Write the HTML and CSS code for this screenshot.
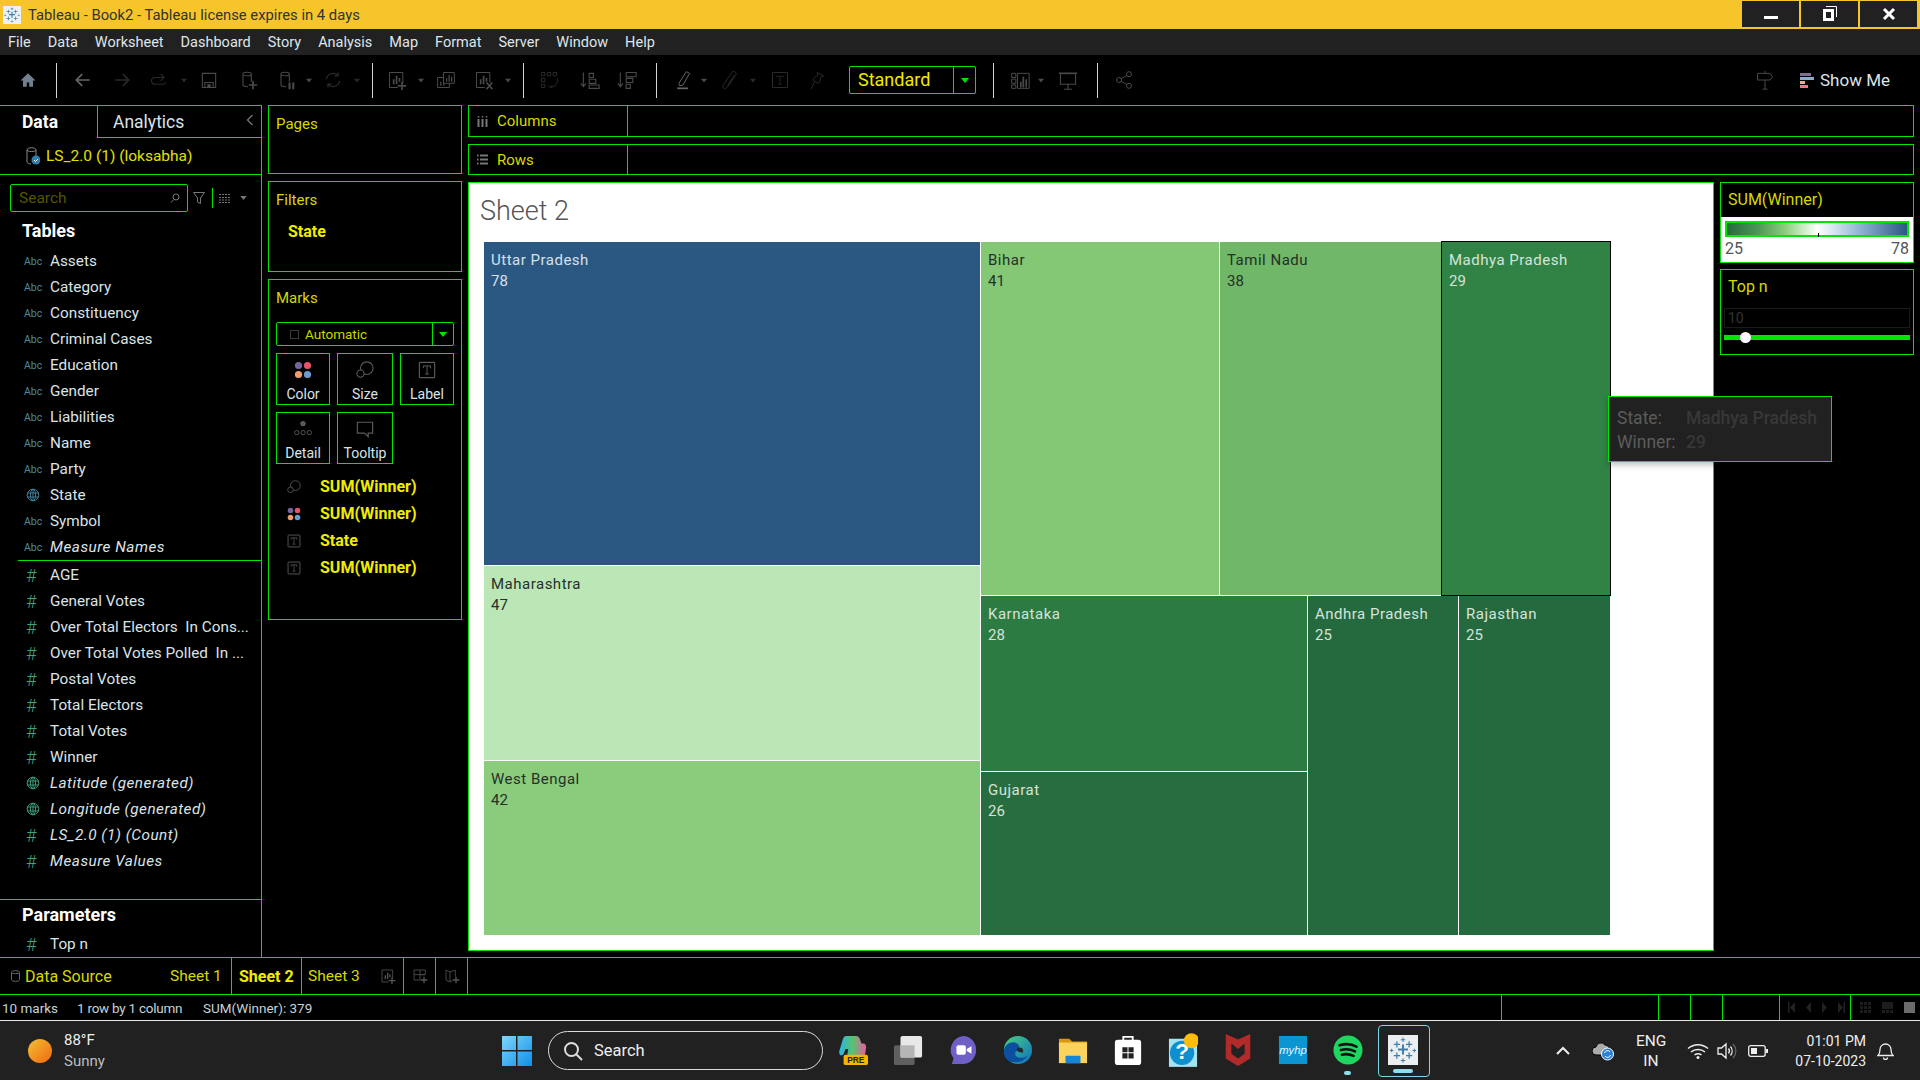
FILE: index.html
```html
<!DOCTYPE html>
<html lang="en">
<head>
<meta charset="utf-8">
<title>Tableau - Book2</title>
<link rel="stylesheet" href="styles.css">
</head>
<body>
<svg class="defs" aria-hidden="true">
  <symbol id="i-home" viewBox="0 0 24 24"><path fill="currentColor" d="M12 4 3 12.5h3V20h4.500v-5h3v5H18v-7.500h3z"/></symbol>
  <symbol id="i-back" viewBox="0 0 24 24"><path fill="none" stroke="currentColor" stroke-width="2" d="M20 12H4M11 5l-7 7 7 7"/></symbol>
  <symbol id="i-fwd" viewBox="0 0 24 24"><path fill="none" stroke="currentColor" stroke-width="2" d="M4 12h16M13 5l7 7-7 7"/></symbol>
  <symbol id="i-redo" viewBox="0 0 24 24"><path fill="none" stroke="currentColor" stroke-width="1.300" d="M17 9H7a3.500 3.500 0 0 0 0 8h10a3.500 3.500 0 0 0 3-2M14 5l4 4-4 4"/></symbol>
  <symbol id="i-save" viewBox="0 0 24 24"><path fill="none" stroke="currentColor" stroke-width="1.300" d="M4 4h16v17H4zM7 21v-6h10v6"/><path fill="currentColor" d="M10 17h4v4h-4z"/></symbol>
  <symbol id="i-dbadd" viewBox="0 0 24 24"><path fill="none" stroke="currentColor" stroke-width="1.300" d="M6 5c0-3 10-3 10 0v9M6 5c0 2.500 10 2.500 10 0M6 5v13c0 1.500 3 2 6 2"/><path fill="currentColor" d="M17 13h2v4h4v2h-4v4h-2v-4h-4v-2h4z"/></symbol>
  <symbol id="i-dbpause" viewBox="0 0 24 24"><path fill="none" stroke="currentColor" stroke-width="1.300" d="M6 5c0-3 10-3 10 0v9M6 5c0 2.500 10 2.500 10 0M6 5v13c0 1.500 3 2 6 2"/><path fill="currentColor" d="M15 15h2.500v8H15zM19.500 15H22v8h-2.500z"/></symbol>
  <symbol id="i-refresh" viewBox="0 0 24 24"><path fill="none" stroke="currentColor" stroke-width="1.500" d="M4 11a8 8 0 0 1 14-4M20 13a8 8 0 0 1-14 4M18 3v4h-4M6 21v-4h4"/></symbol>
  <symbol id="i-wsadd" viewBox="0 0 24 24"><path fill="none" stroke="currentColor" stroke-width="1.200" d="M3 3h16v13M3 3v18h10"/><path fill="currentColor" d="M7 11h2v6H7zM10.500 7h2v10h-2zM14 9.500h2V14h-2zM17 14h2v4h4v2h-4v4h-2v-4h-4v-2h4z"/></symbol>
  <symbol id="i-wsdup" viewBox="0 0 24 24"><path fill="none" stroke="currentColor" stroke-width="1.200" d="M9 3h13v13H9zM9 9H2v12h14v-5"/><path fill="currentColor" d="M12 10h1.500v4H12zM15 6h1.500v8H15zM18 8h1.500v6H18zM5 14h1.500v5H5zM8.500 16h1.500v3H8.500z"/></symbol>
  <symbol id="i-wsclear" viewBox="0 0 24 24"><path fill="none" stroke="currentColor" stroke-width="1.200" d="M3 3h16v12M3 3v18h10"/><path fill="currentColor" d="M7 11h2v6H7zM10.500 7h2v10h-2zM14 9.500h2V14h-2z"/><path fill="none" stroke="currentColor" stroke-width="2" d="m15 15 7 8m0-8-7 8"/></symbol>
  <symbol id="i-swap" viewBox="0 0 24 24"><path fill="none" stroke="currentColor" stroke-width="1.200" d="M3 3h4v4H3zM10 3h4v4h-4zM17 3h4v4h-4zM3 10h4v4H3zM3 17h4v4H3zM22 10a9 9 0 0 1-8 11M11 19l3 2 2-3"/></symbol>
  <symbol id="i-asc" viewBox="0 0 24 24"><path fill="none" stroke="currentColor" stroke-width="1.300" d="M4 3v17M1 16l3 4 3-4M11 4h5v5h-5zM11 11h8v5h-8zM11 18h12v4H11z"/></symbol>
  <symbol id="i-desc" viewBox="0 0 24 24"><path fill="none" stroke="currentColor" stroke-width="1.300" d="M4 3v17M1 16l3 4 3-4M11 3h12v5H11zM11 10h8v5h-8zM11 17h5v5h-5z"/></symbol>
  <symbol id="i-pen" viewBox="0 0 24 24"><path fill="none" stroke="currentColor" stroke-width="1.200" d="M16 2l4 2-8 14-4 1-1-3z"/><path fill="currentColor" d="M5 21h13v2H5z"/></symbol>
  <symbol id="i-clip" viewBox="0 0 24 24"><path fill="none" stroke="currentColor" stroke-width="1.200" d="M17 6l-9 15c-3 3-6 0-4-3L14 3c2-3 7 0 5 3l-9 13"/></symbol>
  <symbol id="i-text" viewBox="0 0 24 24"><path fill="none" stroke="currentColor" stroke-width="1.200" d="M3 3h18v18H3z"/><path fill="none" stroke="currentColor" d="M8 9V7.500h8V9M12 7.500V17M10 17h4"/></symbol>
  <symbol id="i-pin" viewBox="0 0 24 24"><path fill="none" stroke="currentColor" stroke-width="1.200" d="M12 3l8 4-3 1-2 7-2 1-6-4 1-2 5-4zM9 14l-4 9"/></symbol>
  <symbol id="i-fit" viewBox="0 0 24 24"><path fill="none" stroke="currentColor" stroke-width="1.200" d="M2 4h5v5H2zM2 11h5v5H2zM2 18h5v4H2zM9 4h14v18H9z"/><path fill="currentColor" d="M12 14h2v7h-2zM15 8h2v13h-2zM18.500 11h2v10h-2z"/></symbol>
  <symbol id="i-present" viewBox="0 0 24 24"><path fill="currentColor" d="M1 3h22v2H1z"/><path fill="none" stroke="currentColor" stroke-width="1.300" d="M3 5v12h18V5M12 17v6M7 23h10"/></symbol>
  <symbol id="i-share" viewBox="0 0 24 24"><circle cx="18" cy="5" r="3" fill="none" stroke="currentColor" stroke-width="1.200"/><circle cx="6" cy="12" r="3" fill="none" stroke="currentColor" stroke-width="1.200"/><circle cx="18" cy="19" r="3" fill="none" stroke="currentColor" stroke-width="1.200"/><path stroke="currentColor" stroke-width="1.200" d="m8.500 10.500 7-4M8.500 13.500l7 4"/></symbol>
  <symbol id="i-sign" viewBox="0 0 24 24"><path fill="none" stroke="currentColor" stroke-width="1.200" d="M12 1v3M3 4h15l3 4-3 4H3zM12 12v11M9 23h6"/></symbol>
  <symbol id="i-dots" viewBox="0 0 20 20"><circle cx="5" cy="5" r="4" fill="#75659b"/><circle cx="15" cy="5" r="4" fill="#e8516a"/><circle cx="5" cy="15" r="4" fill="#ee9a6b"/><circle cx="15" cy="15" r="4" fill="#6a9bd3"/></symbol>
  <symbol id="i-size" viewBox="0 0 20 20"><circle cx="12" cy="8" r="7" fill="none" stroke="currentColor" stroke-width="1.200"/><circle cx="5" cy="14" r="4" fill="#000" stroke="currentColor" stroke-width="1.200"/></symbol>
  <symbol id="i-label" viewBox="0 0 20 20"><rect x="1.500" y="1.500" width="17" height="17" rx="1" fill="none" stroke="currentColor" stroke-width="1.300"/><path fill="none" stroke="currentColor" stroke-width="1.100" d="M6 8V5.500h8V8M10 5.500v9M8 14.500h4"/></symbol>
  <symbol id="i-detail" viewBox="0 0 20 20"><circle cx="10" cy="4" r="3" fill="currentColor"/><circle cx="3" cy="14" r="2.400" fill="none" stroke="currentColor"/><circle cx="10" cy="14" r="2.400" fill="none" stroke="currentColor"/><circle cx="17" cy="14" r="2.400" fill="none" stroke="currentColor"/></symbol>
  <symbol id="i-tip" viewBox="0 0 20 20"><path fill="none" stroke="currentColor" stroke-width="1.300" d="M1.500 2.500h17v12h-5v4l-4-4h-8z"/></symbol>
  <symbol id="i-globe" viewBox="0 0 14 14"><g fill="none" stroke="currentColor"><circle cx="7" cy="7" r="5.800"/><ellipse cx="7" cy="7" rx="2.600" ry="5.800"/><path d="M1.200 5h11.600M1.200 9h11.600M7 1v12"/></g></symbol>
  <symbol id="i-tableau" viewBox="0 0 24 24"><g fill="#3e7ea8"><path d="M11.200 7.500h1.600v3.200H16v1.600h-3.200v3.200h-1.600v-3.200H8v-1.600h3.200z"/><path d="M6.600 5h1v2h2v1h-2v2h-1V8h-2V7h2zM16.400 5h1v2h2v1h-2v2h-1V8h-2V7h2zM6.600 14h1v2h2v1h-2v2h-1v-2h-2v-1h2zM16.400 14h1v2h2v1h-2v2h-1v-2h-2v-1h2zM11.600 2h.8v1.400h1.400v.8h-1.400v1.400h-.8V4.200h-1.400v-.8h1.400zM11.600 18.500h.8v1.400h1.400v.8h-1.400v1.400h-.8v-1.400h-1.400v-.8h1.400zM2.500 11h.8v1h1v.8h-1v1h-.8v-1h-1V12h1zM20.700 11h.8v1h1v.8h-1v1h-.8v-1h-1V12h1z"/></g></symbol>
  <symbol id="i-caret" viewBox="0 0 8 5"><path fill="currentColor" d="M0 0h8L4 5z"/></symbol>
</svg>

<div class="app">
  <header class="titlebar">
    <svg class="app-logo"><use href="#i-tableau"/></svg>
    <span class="title-text">Tableau - Book2 - Tableau license expires in 4 days</span>
    <div class="winbtns">
      <button class="winbtn"><svg width="14" height="14" viewBox="0 0 14 14"><path fill="#fff" d="M0 9h14v3H0z"/></svg></button>
      <button class="winbtn"><svg width="14" height="16" viewBox="0 0 14 16"><path fill="#fff" d="M0 3h11v12H0zM3 6v6h5V6z"/><path fill="none" stroke="#fff" d="M3 .5h10.500V11"/></svg></button>
      <button class="winbtn"><svg width="14" height="14" viewBox="0 0 14 14"><path stroke="#fff" stroke-width="3" d="m2 2 10 10M12 2 2 12"/></svg></button>
    </div>
  </header>

  <nav class="menubar">
    <span>File</span><span>Data</span><span>Worksheet</span><span>Dashboard</span><span>Story</span><span>Analysis</span><span>Map</span><span>Format</span><span>Server</span><span>Window</span><span>Help</span>
  </nav>

  <div class="toolbar">
    <svg class="ic c-home"><use href="#i-home"/></svg>
    <i class="sep g16"></i>
    <svg class="ic c-mid g14"><use href="#i-back"/></svg>
    <svg class="ic c-off g15"><use href="#i-fwd"/></svg>
    <svg class="ic c-off g13"><use href="#i-redo"/></svg>
    <svg class="ca c-off g9"><use href="#i-caret"/></svg>
    <svg class="ic c-dim g9"><use href="#i-save"/></svg>
    <svg class="ic c-dim g15"><use href="#i-dbadd"/></svg>
    <svg class="ic c-dim g14"><use href="#i-dbpause"/></svg>
    <svg class="ca c-dim g7"><use href="#i-caret"/></svg>
    <svg class="ic c-off g8"><use href="#i-refresh"/></svg>
    <svg class="ca c-off g8"><use href="#i-caret"/></svg>
    <i class="sep g11"></i>
    <svg class="ic c-dim g12"><use href="#i-wsadd"/></svg>
    <svg class="ca c-dim g8"><use href="#i-caret"/></svg>
    <svg class="ic c-dim g9"><use href="#i-wsdup"/></svg>
    <svg class="ic c-dim g14"><use href="#i-wsclear"/></svg>
    <svg class="ca c-dim g8"><use href="#i-caret"/></svg>
    <i class="sep g11"></i>
    <svg class="ic c-off g13"><use href="#i-swap"/></svg>
    <svg class="ic c-dim g17"><use href="#i-asc"/></svg>
    <svg class="ic c-dim g13"><use href="#i-desc"/></svg>
    <i class="sep g17"></i>
    <svg class="ic c-mid g14"><use href="#i-pen"/></svg>
    <svg class="ca c-dim g5"><use href="#i-caret"/></svg>
    <svg class="ic c-off g10"><use href="#i-clip"/></svg>
    <svg class="ca c-off g7"><use href="#i-caret"/></svg>
    <svg class="ic c-off g11"><use href="#i-text"/></svg>
    <svg class="ic c-off g13"><use href="#i-pin"/></svg>
    <div class="fitbox g20"><span class="fit-label">Standard</span><span class="fit-arrow"><svg class="ca c-green"><use href="#i-caret"/></svg></span></div>
    <i class="sep g17"></i>
    <svg class="ic c-dim g14"><use href="#i-fit"/></svg>
    <svg class="ca c-dim g5"><use href="#i-caret"/></svg>
    <svg class="ic c-dim g11"><use href="#i-present"/></svg>
    <i class="sep g17"></i>
    <svg class="ic c-dim g14"><use href="#i-share"/></svg>
    <svg class="ic c-dim right"><use href="#i-sign"/></svg>
    <div class="showme">
      <span class="sm-bars"><b class="sm1"></b><b class="sm2"></b><b class="sm3"></b><b class="sm4"></b></span>
      <span>Show Me</span>
    </div>
  </div>

  <main class="workspace">
    <aside class="datapane">
      <div class="tabs">
        <div class="tab tab-on">Data</div>
        <div class="tab tab-off">Analytics<svg class="chev" width="8" height="12" viewBox="0 0 8 12"><path fill="none" stroke="#777" stroke-width="1.300" d="M6.500 1 1.500 6l5 5"/></svg></div>
      </div>
      <div class="source">
        <svg class="src-ic" width="14" height="18" viewBox="0 0 14 18"><path fill="none" stroke="#888" d="M1 3c0-3 9-3 9 0v7M1 3c0 2 9 2 9 0M1 3v12c0 1 2 2 4 2"/><circle cx="10" cy="13" r="4.500" fill="#2f7fb5"/><path fill="none" stroke="#fff" d="m8 13 1.500 1.500L12 12"/></svg>
        <span>LS_2.0 (1) (loksabha)</span>
      </div>
      <div class="searchrow">
        <div class="searchbox"><span>Search</span><svg width="10" height="10" viewBox="0 0 10 10"><circle cx="6" cy="4" r="3" fill="none" stroke="#777"/><path stroke="#777" d="M4 6.500 1 9.500"/></svg></div>
        <svg class="s-filter" width="12" height="12" viewBox="0 0 12 12"><path fill="none" stroke="#777" d="M.5.500h11L7.500 6v5.500l-3-1.500V6z"/></svg>
        <i class="s-sep"></i>
        <svg class="s-grid" width="12" height="9" viewBox="0 0 12 9"><path fill="none" stroke="#777" stroke-dasharray="2 1" d="M0 .5h12M0 3.500h12M0 6h12M0 8.500h12"/></svg>
        <svg class="s-caret"><use href="#i-caret"/></svg>
      </div>
      <h2 class="tables-h">Tables</h2>
      <ul class="fields">
        <li><span class="abc">Abc</span>Assets</li>
        <li><span class="abc">Abc</span>Category</li>
        <li><span class="abc">Abc</span>Constituency</li>
        <li><span class="abc">Abc</span>Criminal Cases</li>
        <li><span class="abc">Abc</span>Education</li>
        <li><span class="abc">Abc</span>Gender</li>
        <li><span class="abc">Abc</span>Liabilities</li>
        <li><span class="abc">Abc</span>Name</li>
        <li><span class="abc">Abc</span>Party</li>
        <li><span class="abc"><svg class="globe c-blue"><use href="#i-globe"/></svg></span>State</li>
        <li><span class="abc">Abc</span>Symbol</li>
        <li class="it"><span class="abc">Abc</span>Measure Names</li>
      </ul>
      <ul class="fields measures">
        <li><span class="hash">#</span>AGE</li>
        <li><span class="hash">#</span>General Votes</li>
        <li><span class="hash">#</span>Over Total Electors&nbsp; In Cons...</li>
        <li><span class="hash">#</span>Over Total Votes Polled&nbsp; In ...</li>
        <li><span class="hash">#</span>Postal Votes</li>
        <li><span class="hash">#</span>Total Electors</li>
        <li><span class="hash">#</span>Total Votes</li>
        <li><span class="hash">#</span>Winner</li>
        <li class="it"><span class="abc"><svg class="globe c-teal"><use href="#i-globe"/></svg></span>Latitude (generated)</li>
        <li class="it"><span class="abc"><svg class="globe c-teal"><use href="#i-globe"/></svg></span>Longitude (generated)</li>
        <li class="it"><span class="hash">#</span>LS_2.0 (1) (Count)</li>
        <li class="it"><span class="hash">#</span>Measure Values</li>
      </ul>
      <div class="params">
        <h2 class="params-h">Parameters</h2>
        <ul class="fields">
          <li><span class="hash">#</span>Top n</li>
        </ul>
      </div>
    </aside>

    <section class="cards">
      <div class="card card-pages"><div class="card-t">Pages</div></div>
      <div class="card card-filters"><div class="card-t">Filters</div><div class="filter-pill">State</div></div>
      <div class="card card-marks">
        <div class="card-t">Marks</div>
        <div class="markselect"><i class="mk-check"></i><span class="mk-auto">Automatic</span><span class="mk-arrow"><svg class="ca c-green"><use href="#i-caret"/></svg></span></div>
        <div class="markgrid">
          <div class="mbtn"><svg class="mi"><use href="#i-dots"/></svg><span>Color</span></div>
          <div class="mbtn"><svg class="mi c-dim2"><use href="#i-size"/></svg><span>Size</span></div>
          <div class="mbtn"><svg class="mi c-dim2"><use href="#i-label"/></svg><span>Label</span></div>
          <div class="mbtn"><svg class="mi c-dim2"><use href="#i-detail"/></svg><span>Detail</span></div>
          <div class="mbtn"><svg class="mi c-dim2"><use href="#i-tip"/></svg><span>Tooltip</span></div>
        </div>
        <ul class="pills">
          <li><svg class="pi c-dim2"><use href="#i-size"/></svg>SUM(Winner)</li>
          <li><svg class="pi"><use href="#i-dots"/></svg>SUM(Winner)</li>
          <li><svg class="pi c-dim2"><use href="#i-label"/></svg>State</li>
          <li><svg class="pi c-dim2"><use href="#i-label"/></svg>SUM(Winner)</li>
        </ul>
      </div>
    </section>

    <section class="main">
      <div class="shelf"><div class="shelf-l"><svg width="11" height="11" viewBox="0 0 11 11"><path stroke="#777" stroke-width="2" d="M1.500 3v8M5.500 3v8M9.500 3v8"/><path stroke="#777" stroke-width="1.500" d="M1.500 0v1.500M5.500 0v1.500M9.500 0v1.500"/></svg><span>Columns</span></div></div>
      <div class="shelf"><div class="shelf-l"><svg width="11" height="11" viewBox="0 0 11 11"><path stroke="#777" stroke-width="2" d="M3 1.500h8M3 5.500h8M3 9.500h8"/><path stroke="#777" stroke-width="2" d="M0 1.500h1.500M0 5.500h1.500M0 9.500h1.500"/></svg><span>Rows</span></div></div>
      <div class="stage">
        <div class="viz">
          <h1 class="viz-title">Sheet 2</h1>
          <div class="treemap">
            <div class="tm-col tm-w496">
              <div class="cell dk h-up up">Uttar Pradesh<br><span class="num">78</span></div>
              <div class="cell lt h-mh mh">Maharashtra<br><span class="num">47</span></div>
              <div class="cell lt h-wb wb">West Bengal<br><span class="num">42</span></div>
            </div>
            <div class="tm-col tm-w629">
              <div class="tm-row h-top">
                <div class="cell lt w-bh bh">Bihar<br><span class="num">41</span></div>
                <div class="cell lt w-tn tn">Tamil Nadu<br><span class="num">38</span></div>
                <div class="cell dk w-mp mp">Madhya Pradesh<br><span class="num">29</span></div>
              </div>
              <div class="tm-row h-bot">
                <div class="tm-col w-ka">
                  <div class="cell dk h-ka ka">Karnataka<br><span class="num">28</span></div>
                  <div class="cell dk h-gj gj">Gujarat<br><span class="num">26</span></div>
                </div>
                <div class="cell dk w-ap ap">Andhra Pradesh<br><span class="num">25</span></div>
                <div class="cell dk w-rj ap">Rajasthan<br><span class="num">25</span></div>
              </div>
            </div>
          </div>
        </div>
        <div class="sidecards">
          <div class="legend">
            <div class="legend-h">SUM(Winner)</div>
            <div class="legend-b">
              <div class="ramp"><i class="tick"></i></div>
              <div class="ramp-l"><span>25</span><span>78</span></div>
            </div>
          </div>
          <div class="param">
            <div class="legend-h param-h">Top n</div>
            <div class="param-in">10</div>
            <div class="slider"><i class="thumb"></i></div>
          </div>
        </div>
      </div>
      <div class="tooltip">
        <div><span class="tt-k">State:</span><span class="tt-v">Madhya Pradesh</span></div>
        <div><span class="tt-k">Winner:</span><span class="tt-v">29</span></div>
      </div>
    </section>
  </main>

  <div class="tabbar">
    <div class="tb-src"><svg width="9" height="12" viewBox="0 0 9 12"><path fill="none" stroke="#666" d="M.5 2.500c0-2.500 8-2.500 8 0v7c0 2.500-8 2.500-8 0zM.5 2.500c0 1.500 8 1.500 8 0"/></svg><span>Data Source</span></div>
    <div class="tb-s1">Sheet 1</div>
    <div class="tb-s2">Sheet 2</div>
    <div class="tb-s3">Sheet 3</div>
    <div class="tb-add tb-a1"><svg class="addic"><use href="#i-wsadd"/></svg></div>
    <div class="tb-add tb-a2"><svg class="addic" viewBox="0 0 24 24"><path fill="none" stroke="currentColor" stroke-width="1.200" d="M3 3h17v7H12v8H3zM3 10h17M12 3v7"/><path fill="currentColor" d="M17 13h2v4h4v2h-4v4h-2v-4h-4v-2h4z"/></svg></div>
    <div class="tb-add tb-a3"><svg class="addic" viewBox="0 0 24 24"><path fill="none" stroke="currentColor" stroke-width="1.200" d="M3 3l6 3 8-3v10M3 3v15l6 3 4-2M9 6v15"/><path fill="currentColor" d="M17 13h2v4h4v2h-4v4h-2v-4h-4v-2h4z"/></svg></div>
  </div>

  <footer class="statusbar">
    <span class="st-a">10 marks</span>
    <span class="st-b">1 row by 1 column</span>
    <span class="st-c">SUM(Winner): 379</span>
    <i class="st-sep st1"></i><i class="st-sep st2"></i><i class="st-sep st3"></i><i class="st-sep st4"></i><i class="st-sep st5"></i>
    <div class="st-nav">
      <svg width="7" height="11" viewBox="0 0 7 11"><path fill="#222" d="M0 0h1.500v11H0zM7 0v11L2 5.500z"/></svg>
      <svg width="5" height="11" viewBox="0 0 5 11"><path fill="#222" d="M5 0v11L0 5.500z"/></svg>
      <svg width="5" height="11" viewBox="0 0 5 11"><path fill="#222" d="M0 0v11l5-5.500z"/></svg>
      <svg width="7" height="11" viewBox="0 0 7 11"><path fill="#222" d="M7 0H5.500v11H7zM0 0v11l5-5.500z"/></svg>
    </div>
    <i class="st-sep"></i>
    <div class="st-view">
      <svg width="11" height="11" viewBox="0 0 11 11"><path fill="#1d1d1d" d="M0 0h3v3H0zM4 0h3v3H4zM8 0h3v3H8zM0 4h3v3H0zM4 4h3v3H4zM8 4h3v3H8zM0 8h3v3H0zM4 8h3v3H4zM8 8h3v3H8z"/></svg>
      <svg width="11" height="11" viewBox="0 0 11 11"><path fill="#1d1d1d" d="M0 0h11v7H0zM0 8h3v3H0zM4 8h3v3H4zM8 8h3v3H8z"/></svg>
      <i class="st-solid"></i>
    </div>
  </footer>

  <div class="taskbar">
    <div class="weather">
      <i class="sun"></i>
      <div class="wx-t"><div>88°F</div><div class="wx-s">Sunny</div></div>
    </div>
    <svg class="start" viewBox="0 0 30 30"><defs><linearGradient id="win" x1="0" y1="0" x2="1" y2="1"><stop offset="0" stop-color="#7fd6fb"/><stop offset="1" stop-color="#0f8fe8"/></linearGradient></defs><path fill="url(#win)" d="M0 0h14v14H0zM15.500 0H30v14H15.500zM0 15.500h14V30H0zM15.500 15.500H30V30H15.500z"/></svg>
    <div class="tsearch"><svg width="20" height="20" viewBox="0 0 20 20"><circle cx="8.500" cy="8.500" r="6.500" fill="none" stroke="#ddd" stroke-width="2"/><path stroke="#ddd" stroke-width="2" d="m13 13 6 6"/></svg><span>Search</span></div>
    <div class="apps">
      <div class="app-s"><svg class="ai" viewBox="0 0 32 32"><defs><linearGradient id="cp" x1="0" y1="0" x2="1" y2="0"><stop offset="0" stop-color="#2bb6e8"/><stop offset=".5" stop-color="#57c26e"/><stop offset="1" stop-color="#ef5aa0"/></linearGradient></defs><path fill="url(#cp)" d="M9 1h10c3 0 4 2 5 5l1 3h2c2 0 3 2 3 4l-1 7c0 2-2 3-4 3H13c-2 0-3-1-3-3l1-5H8l-2 5c-1 2-3 2-4 1-1-2-1-3 0-6L5 5c1-3 2-4 4-4z"/><rect x="6" y="21" width="26" height="11" rx="2" fill="#f7b500"/><text x="19" y="30" class="pre">PRE</text></svg></div>
      <div class="app-s"><svg class="ai" viewBox="0 0 32 32"><rect x="1" y="11" width="22" height="21" rx="2" fill="#5f5f5f"/><rect x="8" y="1" width="23" height="23" rx="2" fill="#e8e8e8"/><rect x="8" y="11" width="15" height="13" fill="#b5b5b5"/></svg></div>
      <div class="app-s"><svg class="ai" viewBox="0 0 32 32"><path fill="#6f60c8" d="M16 1a14 15 0 0 1 0 30H4l2-6A15 15 0 0 1 16 1z"/><rect x="9" y="11" width="10" height="10" rx="2" fill="#fff"/><path fill="#fff" d="m20 15 5-3v8l-5-3z"/></svg></div>
      <div class="app-s"><svg class="ai" viewBox="0 0 32 32"><defs><linearGradient id="ed" x1="0" y1="0" x2="1" y2="1"><stop offset="0" stop-color="#49d17b"/><stop offset="1" stop-color="#0d6ec4"/></linearGradient></defs><circle cx="16" cy="16" r="15" fill="url(#ed)"/><path fill="#0b4f9e" d="M1 17c1-8 9-11 14-8 3 2 3 6 0 8-3 1-3 6 2 7 3 1 6 0 9-2-5 10-26 10-25-5z"/><path fill="#1f2a30" d="M15 14c5-2 8 2 6 5-3-1-7-1-6-5z"/></svg></div>
      <div class="app-s"><svg class="ai" viewBox="0 0 32 32"><path fill="#d79a0a" d="M1 4h11l3 3h16v6H1z"/><path fill="#fbd35c" d="M1 8h30v22H1z"/><rect x="8" y="22" width="16" height="8" rx="1" fill="#1586d6"/></svg></div>
      <div class="app-s"><svg class="ai" viewBox="0 0 32 32"><path fill="none" stroke="#fff" stroke-width="2" d="M11 6V2h10v4"/><rect x="2" y="5" width="28" height="27" rx="3" fill="#fff"/><path fill="#222" d="M10 13h5.500v5.500H10zM16.500 13H22v5.500h-5.500zM10 19.500h5.500V25H10zM16.500 19.500H22V25h-5.500z"/></svg></div>
      <div class="app-s"><svg class="ai ai-h" viewBox="0 0 32 36"><rect x="1" y="6" width="30" height="30" fill="#a5e3f2"/><circle cx="15" cy="21" r="13" fill="#0f8fd0"/><text x="15" y="28" class="qm">?</text><circle cx="25" cy="8" r="8" fill="#fdbd0a"/></svg></div>
      <div class="app-s"><svg class="ai ai-h" viewBox="0 0 28 36"><path fill="#b22a2a" d="M1 1l13 6 13-6v26l-13 8-13-8z"/><path fill="#222" d="M7 11l7 6 7-6v11l-7 5-7-5z"/></svg></div>
      <div class="app-s"><svg class="ai" viewBox="0 0 32 32"><rect x="1" y="1" width="30" height="30" fill="#0b95d3"/><text x="16" y="20" class="myhp">myhp</text></svg></div>
      <div class="app-s"><svg class="ai" viewBox="0 0 32 32"><circle cx="16" cy="16" r="15.500" fill="#1ed760"/><path fill="none" stroke="#111" stroke-width="2.800" stroke-linecap="round" d="M7 11c6-2 12-2 18 1.500M8.500 16c5-1.500 10-1 15 1.500M9.500 21c4-1 8-.7 12.500 1.300"/></svg><i class="dot"></i></div>
      <div class="app-s app-on"><svg class="ai tableau-ai"><use href="#i-tableau"/></svg><i class="bar"></i></div>
    </div>
    <div class="tray">
      <svg class="t-chev" width="16" height="10" viewBox="0 0 16 10"><path fill="none" stroke="#eee" stroke-width="2" d="m2 8 6-6 6 6"/></svg>
      <svg class="t-cloud" width="22" height="20" viewBox="0 0 22 20"><path fill="#aaa" stroke="#000" d="M4 14a4 4 0 0 1 0-8 5 5 0 0 1 9-2 4 4 0 0 1 4 5v5z"/><circle cx="15.500" cy="13" r="6" fill="#2a7fd6" stroke="#fff"/><path fill="none" stroke="#fff" d="M12.500 12a3 3 0 0 1 5.500-1M18.500 14a3 3 0 0 1-5.500 1"/></svg>
      <div class="t-lang"><div>ENG</div><div>IN</div></div>
      <svg class="t-wifi" width="22" height="16" viewBox="0 0 22 16"><path fill="none" stroke="#eee" stroke-width="1.500" d="M1 5.500c6-5 14-5 20 0M4 9c4-3.500 10-3.500 14 0M7.500 12c2-1.500 5-1.500 7 0"/><circle cx="11" cy="14.500" r="1.500" fill="#eee"/></svg>
      <svg class="t-vol" width="20" height="18" viewBox="0 0 20 18"><path fill="none" stroke="#eee" stroke-width="1.300" d="M1 6h3.500L9 2v14l-4.500-4H1zM11.500 6.500a4 4 0 0 1 0 5M13.500 4.500a7 7 0 0 1 0 9"/><path fill="none" stroke="#666" stroke-width="1.300" d="M16 2a10 10 0 0 1 0 14"/></svg>
      <svg class="t-batt" width="20" height="12" viewBox="0 0 20 12"><rect x=".7" y=".7" width="16.500" height="10.600" rx="2" fill="none" stroke="#eee" stroke-width="1.300"/><rect x="3" y="3" width="6" height="6" fill="#eee"/><rect x="18" y="4" width="2" height="4" fill="#eee"/></svg>
      <div class="t-clock"><div>01:01 PM</div><div>07-10-2023</div></div>
      <svg class="t-bell" width="17" height="18" viewBox="0 0 17 18"><path fill="none" stroke="#eee" stroke-width="1.300" d="M1 13.500c2-2 2-3 2-6a5.500 5.500 0 0 1 11 0c0 3 0 4 2 6zM6.500 15.500a2 2 0 0 0 4 0"/></svg>
    </div>
  </div>
</div>
</body>
</html>
```

FILE: styles.css
```css
* { box-sizing: border-box; }
html, body { margin: 0; padding: 0; background: #000; }
body { font-family: Roboto, "Liberation Sans", sans-serif; }
ul { list-style: none; margin: 0; padding: 0; }
h1, h2 { margin: 0; font-weight: inherit; }
i { display: block; }
.defs { position: absolute; width: 0; height: 0; }

.app { width: 1920px; height: 1080px; display: flex; flex-direction: column; overflow: hidden; position: relative; }

/* title bar */
.titlebar { height: 29px; flex: none; background: #f6c52b; display: flex; align-items: center; color: #333; font-size: 14.800px; padding-left: 3px; }
.app-logo { width: 18px; height: 18px; background: #eef1f3; margin-right: 7px; flex: none; }
.title-text { white-space: nowrap; }
.winbtns { margin-left: auto; display: flex; gap: 2px; padding-right: 3px; align-self: flex-start; padding-top: 1px; }
.winbtn { width: 57px; height: 26px; background: #212121; border: 0; padding: 0; display: flex; align-items: center; justify-content: center; }

/* menu */
.menubar { height: 26px; flex: none; background: #212121; color: #dfe6ec; font-size: 14.500px; display: flex; align-items: center; gap: 17px; padding-left: 8px; }

/* toolbar */
.toolbar { height: 50px; flex: none; display: flex; align-items: center; padding-left: 16px; padding-right: 30px; }
.ic { width: 24px; height: 24px; flex: none; padding: 2px; }
.ca { width: 8px; height: 5px; flex: none; padding: 0 1px; }
.ca.c-green { padding: 0; }
.sep { width: 1px; height: 35px; background: #d5d5d5; flex: none; }
.c-home { color: #71818f; }
.c-mid { color: #666; }
.c-dim { color: #4a4a4a; }
.c-off { color: #2a2a2a; }
.c-dim2 { color: #5a5a5a; }
.c-green { color: #00e600; }
.c-blue { color: #3f7f9a; }
.c-teal { color: #3a9a78; }
.g5 { margin-left: 5px; } .g7 { margin-left: 7px; } .g8 { margin-left: 8px; } .g9 { margin-left: 9px; }
.g10 { margin-left: 10px; } .g11 { margin-left: 11px; } .g12 { margin-left: 12px; } .g13 { margin-left: 13px; }
.g14 { margin-left: 14px; } .g15 { margin-left: 15px; } .g16 { margin-left: 16px; } .g17 { margin-left: 17px; } .g20 { margin-left: 20px; }
.right { margin-left: auto; }
.fitbox { width: 127px; height: 28px; border: 1px solid #00e600; border-radius: 2px; display: flex; flex: none; color: #f0e800; font-size: 18px; }
.fit-label { width: 104px; padding-left: 8px; line-height: 26px; border-right: 1px solid #00e600; }
.fit-arrow { flex: 1; display: flex; align-items: center; justify-content: center; }
.showme { display: flex; align-items: center; gap: 6px; margin-left: 23px; color: #dce4ea; font-size: 17px; }
.sm-bars { display: flex; flex-direction: column; gap: 1px; width: 14px; }
.sm-bars b { display: block; height: 3px; }
.sm1 { width: 11px; background: #7c6f92; }
.sm2 { width: 14px; background: #8aacd0; }
.sm3 { width: 5px; background: #f0a98a; }
.sm4 { width: 8px; background: #ec7a86; }

/* workspace */
.workspace { height: 852px; flex: none; display: flex; position: relative; }
.datapane { width: 262px; flex: none; border-right: 1px solid #00e600; border-top: 1px solid #00e600; display: flex; flex-direction: column; color: #dbe3e8; font-size: 15.300px; }
.tabs { display: flex; height: 32px; flex: none; }
.tab-on { width: 98px; border-right: 1px solid #00e600; padding-left: 22px; font-weight: 700; color: #fff; font-size: 17.500px; line-height: 32px; }
.tab-off { flex: 1; border-bottom: 1px solid #00e600; padding-left: 15px; font-size: 17.500px; line-height: 32px; position: relative; }
.chev { position: absolute; right: 7px; top: 8px; }
.source { height: 37px; flex: none; display: flex; align-items: center; border-bottom: 1px solid #00e600; padding-left: 26px; gap: 6px; color: #e0e000; font-size: 15.500px; }
.searchrow { height: 43px; flex: none; display: flex; align-items: center; padding-left: 10px; padding-top: 3px; }
.searchbox { width: 178px; height: 28px; border: 1px solid #00e600; border-radius: 2px; display: flex; align-items: center; justify-content: space-between; padding: 0 7px 0 8px; color: #555500; font-size: 15.500px; }
.s-filter { margin-left: 5px; }
.s-sep { width: 1px; height: 20px; background: #00e600; margin-left: 7px; }
.s-grid { margin-left: 6px; }
.s-caret { width: 7px; height: 4px; margin-left: 9px; color: #777; }
.tables-h { height: 30px; flex: none; padding-left: 22px; font-weight: 700; font-size: 18px; color: #fff; line-height: 26px; }
.fields li { height: 26px; display: flex; align-items: center; white-space: nowrap; }
.fields .it { font-style: italic; letter-spacing: .5px; }
.abc { width: 50px; flex: none; padding-left: 24px; font-size: 10.500px; color: #4a8a9c; font-style: normal; letter-spacing: 0; display: flex; align-items: center; }
.hash { width: 50px; flex: none; padding-left: 26px; font-size: 18px; font-weight: 300; color: #3fa37e; font-style: normal; letter-spacing: 0; }
.globe { width: 14px; height: 14px; margin-left: 2px; flex: none; }
.measures { border-top: 1px solid #00e600; margin-left: 18px; padding-top: 1px; }
.measures li { margin-left: -18px; }
.params { margin-top: auto; border-top: 1px solid #00e600; height: 58px; flex: none; }
.params-h { height: 31px; padding-left: 22px; font-weight: 700; font-size: 18px; color: #fff; line-height: 29px; }

/* cards */
.cards { width: 194px; flex: none; margin-left: 6px; display: flex; flex-direction: column; gap: 7px; }
.card { border: 1px solid #00e600; color: #d8d800; font-size: 15px; }
.card-pages { height: 69px; }
.card-filters { height: 91px; }
.card-marks { height: 341px; }
.card-t { padding: 9px 0 0 7px; line-height: 18px; }
.filter-pill { margin: 14px 0 0 19px; color: #f0ec00; font-weight: 700; font-size: 16px; line-height: 18px; }
.markselect { margin: 15px 0 0 7px; width: 178px; height: 24px; border: 1px solid #00e600; border-radius: 2px; display: flex; align-items: center; font-size: 13.500px; }
.mk-check { width: 9px; height: 9px; border: 1px solid #3a3a3a; margin-left: 13px; flex: none; }
.mk-auto { margin-left: 6px; width: 127px; flex: none; color: #c8d800; }
.mk-arrow { flex: 1; align-self: stretch; border-left: 1px solid #00e600; display: flex; align-items: center; justify-content: center; }
.markgrid { margin: 7px 0 0 7px; display: grid; grid-template-columns: 54px 56px 54px; column-gap: 7px; row-gap: 7px; grid-auto-rows: 52px; }
.mbtn { border: 1px solid #00e600; display: flex; flex-direction: column; align-items: center; padding-top: 7px; color: #dbe3e8; font-size: 14px; }
.mi { width: 18px; height: 18px; flex: none; }
.mbtn span { margin-top: 7px; line-height: 16px; }
.pills { margin-top: 9px; }
.pills li { height: 27px; display: flex; align-items: center; padding-left: 18px; color: #f0ec00; font-weight: 700; font-size: 16px; white-space: nowrap; }
.pi { width: 14px; height: 14px; margin-right: 19px; flex: none; }

/* main */
.main { width: 1446px; flex: none; margin-left: 6px; display: flex; flex-direction: column; gap: 7px; }
.shelf { height: 32px; flex: none; border: 1px solid #00e600; }
.shelf + .shelf { height: 31px; }
.shelf-l { width: 159px; height: 100%; border-right: 1px solid #00e600; display: flex; align-items: center; padding-left: 8px; gap: 9px; color: #d8d800; font-size: 15px; }
.stage { display: flex; gap: 6px; align-items: flex-start; }
.viz { width: 1246px; height: 769px; flex: none; background: #fff; border: 1px solid #00e600; padding: 0 0 0 15px; }
.viz-title { font-size: 27px; font-weight: 300; color: #555; line-height: 30px; height: 59px; padding-top: 13px; margin-left: -4px; }

.treemap { display: flex; gap: 1px; width: 1126px; height: 693px; }
.tm-col { display: flex; flex-direction: column; gap: 1px; flex: none; }
.tm-row { display: flex; gap: 1px; flex: none; }
.tm-w496 { width: 496px; }
.tm-w629 { width: 629px; }
.h-up { height: 323px; } .h-mh { height: 194px; } .h-wb { height: 174px; }
.h-top { height: 353px; } .h-bot { height: 339px; }
.w-bh { width: 238px; } .w-tn { width: 221px; } .w-mp { width: 168px; }
.w-ka { width: 326px; } .w-ap { width: 150px; } .w-rj { width: 151px; }
.h-ka { height: 175px; } .h-gj { height: 163px; }
.cell { padding: 8px 7px 0 7px; font-size: 15px; line-height: 21px; flex: none; letter-spacing: .5px; }
.num { letter-spacing: 0; }
.lt { color: #26302a; }
.dk { color: #d5e3da; }
.up { background: #2b5783; color: #d7e0e9; }
.mh { background: #bbe7b6; }
.wb { background: #8acc7b; }
.bh { background: #84c876; }
.tn { background: #70b767; }
.mp { background: #318345; outline: 1px solid #000; position: relative; z-index: 1; }
.ka { background: #2c7b42; }
.gj { background: #286d3f; }
.ap { background: #25693f; }

/* legends */
.sidecards { width: 194px; flex: none; display: flex; flex-direction: column; gap: 6px; }
.legend { border: 1px solid #00e600; height: 81px; }
.legend-h { height: 34px; padding: 8px 0 0 7px; color: #d8d800; font-size: 16px; line-height: 18px; }
.legend-b { background: #fff; height: 45px; padding: 4px 4px 0 4px; }
.ramp { height: 16px; border: 2px solid #00e600; background: linear-gradient(90deg, #25693f 0%, #4f9a58 18%, #8acc7b 32%, #c9ecc3 42%, #fff 50%, #d2e3ef 60%, #8fb3d2 74%, #2b5783 100%); position: relative; width: 184px; }
.tick { position: absolute; left: 91px; bottom: -2px; width: 1px; height: 4px; background: #000; }
.ramp-l { display: flex; justify-content: space-between; color: #555; font-size: 16px; line-height: 20px; padding-top: 2px; width: 184px; }
.param { border: 1px solid #00e600; height: 86px; position: relative; }
.param-h { height: 38px; }
.param-in { margin-left: 3px; width: 186px; height: 20px; border: 1px solid #1a1a1a; color: #333; font-size: 14px; line-height: 18px; padding-left: 3px; }
.slider { margin: 7px 0 0 3px; width: 186px; height: 5px; background: #00e600; position: relative; }
.thumb { position: absolute; left: 16px; top: -3px; width: 11px; height: 11px; border-radius: 50%; background: #fff; }

/* tooltip */
.tooltip { position: absolute; left: 1608px; top: 291px; width: 224px; height: 66px; background: #212121; border: 1px solid #00e600; padding: 9px 0 0 8px; font-size: 17.500px; line-height: 24px; box-shadow: 0 3px 6px rgba(0,0,0,.25); z-index: 3; }
.tt-k { display: inline-block; width: 69px; color: #5c5c5c; }
.tt-v { color: #383838; font-weight: 500; }

/* tabs */
.tabbar { height: 38px; flex: none; border-top: 1px solid #00e600; border-bottom: 1px solid #00e600; display: flex; align-items: stretch; color: #d8d800; font-size: 15.500px; line-height: 37px; }
.tb-src { width: 169px; padding-left: 11px; display: flex; align-items: center; gap: 5px; flex: none; font-size: 16px; }
.tb-s1 { width: 63px; flex: none; border-right: 1px solid #00e600; padding-left: 1px; }
.tb-s2 { width: 70px; flex: none; border-right: 1px solid #00e600; padding-left: 7px; color: #f0ec00; font-weight: 700; font-size: 16px; }
.tb-s3 { width: 70px; flex: none; padding-left: 6px; }
.tb-add { flex: none; display: flex; align-items: center; justify-content: center; border-right: 1px solid #00e600; color: #555; }
.tb-a1 { width: 32px; }
.tb-a2, .tb-a3 { width: 32px; }
.addic { width: 16px; height: 16px; }

/* status */
.statusbar { height: 26px; flex: none; border-bottom: 1px solid #e8e8e8; display: flex; align-items: center; color: #c6d2da; font-size: 13.500px; white-space: nowrap; }
.st-a { margin-left: 2px; width: 75px; flex: none; }
.st-b { width: 126px; flex: none; letter-spacing: -.25px; }
.st-c { width: 1298px; flex: none; }
.st-sep { width: 1px; height: 100%; background: #00e600; flex: none; }
.st2 { margin-left: 156px; }
.st3, .st4 { margin-left: 31px; }
.st5 { margin-left: 56px; }
.st-nav { width: 70px; flex: none; display: flex; align-items: center; gap: 11px; padding-left: 8px; }
.st-view { display: flex; align-items: center; gap: 11px; padding-left: 9px; }
.st-solid { width: 11px; height: 11px; background: #6b6b6b; }

/* taskbar */
.taskbar { flex: 1; background: #212121; display: flex; align-items: center; color: #eee; font-size: 15px; }
.weather { width: 502px; flex: none; display: flex; align-items: center; padding-left: 28px; gap: 12px; }
.sun { width: 24px; height: 24px; border-radius: 50%; background: linear-gradient(135deg, #f2c033, #f06810); flex: none; }
.wx-t { line-height: 21px; }
.wx-s { color: #bdbdbd; }
.start { width: 30px; height: 30px; flex: none; }
.tsearch { width: 275px; height: 39px; border: 1px solid #dcdcdc; border-radius: 20px; margin-left: 16px; flex: none; display: flex; align-items: center; gap: 11px; padding-left: 14px; font-size: 16.500px; }
.apps { display: flex; margin-left: 2px; margin-bottom: 2px; flex: none; }
.app-s { width: 55px; height: 50px; flex: none; display: flex; align-items: center; justify-content: center; position: relative; }
.ai { width: 30px; height: 30px; }
.ai-h { height: 34px; }
.pre { font: 700 9px "Liberation Sans", sans-serif; fill: #222; text-anchor: middle; }
.qm { font: 700 24px "Liberation Sans", sans-serif; fill: #fff; text-anchor: middle; }
.myhp { font: italic 12px "Liberation Sans", sans-serif; fill: #e6f7ff; text-anchor: middle; }
.dot { position: absolute; left: 24px; bottom: 0; width: 7px; height: 4px; background: #8fdcec; border-radius: 2px; }
.app-on::before { content: ""; position: absolute; left: 3px; top: 0; width: 50px; height: 50px; border: 1px solid #7fd6e6; border-radius: 4px; }
.tableau-ai { background: #eceff2; }
.bar { position: absolute; left: 18px; bottom: 2px; width: 20px; height: 4px; background: #8fdcec; border-radius: 2px; }
.tray { margin-left: auto; display: flex; align-items: center; padding-right: 26px; }
.t-chev { margin-right: 21px; }
.t-cloud { margin-right: 22px; }
.t-lang { width: 30px; text-align: center; line-height: 20px; margin-right: 21px; font-size: 15.500px; }
.t-wifi { margin-right: 8px; }
.t-vol { margin-right: 11px; }
.t-batt { margin-right: 18px; }
.t-clock { text-align: right; line-height: 20px; width: 80px; margin-right: 11px; white-space: nowrap; font-size: 14px; }
```
